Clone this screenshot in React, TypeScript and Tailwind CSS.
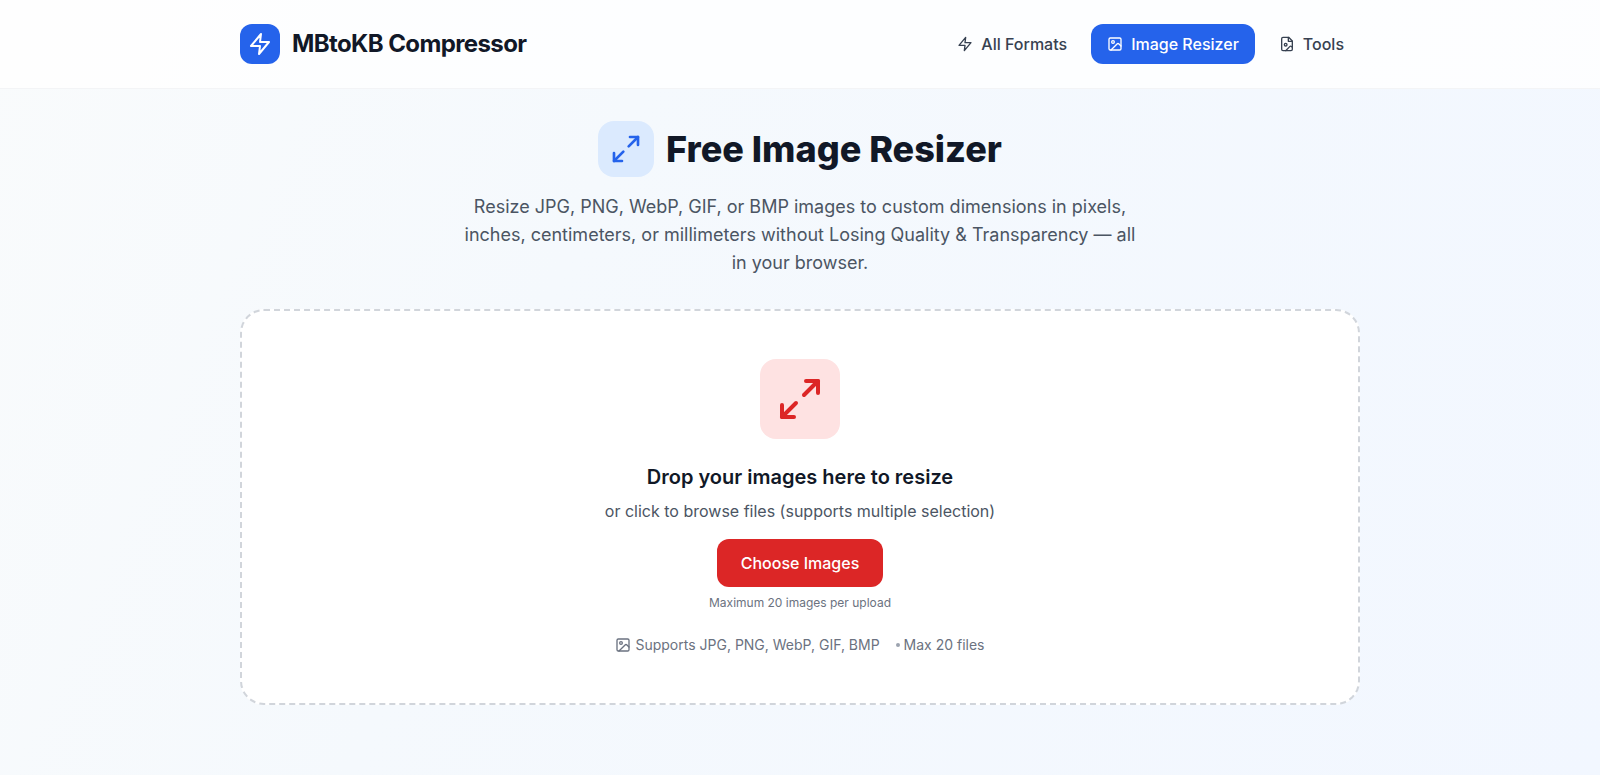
import { useRef } from "react";
import type { ReactNode } from "react";

type IconProps = { className?: string; children: ReactNode };

function Icon({ className = "", children }: IconProps) {
  return (
    <svg
      className={className}
      viewBox="0 0 24 24"
      fill="none"
      stroke="currentColor"
      strokeWidth={2}
      strokeLinecap="round"
      strokeLinejoin="round"
      aria-hidden="true"
    >
      {children}
    </svg>
  );
}

function ZapIcon({ className }: { className?: string }) {
  return (
    <Icon className={className}>
      <polygon points="13 2 3 14 12 14 11 22 21 10 12 10 13 2" />
    </Icon>
  );
}

function PictureIcon({ className }: { className?: string }) {
  return (
    <Icon className={className}>
      <rect width="18" height="18" x="3" y="3" rx="2" ry="2" />
      <circle cx="9" cy="9" r="2" />
      <path d="m21 15-3.086-3.086a2 2 0 0 0-2.828 0L6 21" />
    </Icon>
  );
}

function FilePictureIcon({ className }: { className?: string }) {
  return (
    <Icon className={className}>
      <path d="M14.5 2H6a2 2 0 0 0-2 2v16a2 2 0 0 0 2 2h12a2 2 0 0 0 2-2V7.500L14.500 2z" />
      <polyline points="14 2 14 8 20 8" />
      <circle cx="10" cy="13" r="2" />
      <path d="m20 17-1.090-1.090a2 2 0 0 0-2.820 0L10 22" />
    </Icon>
  );
}

function ExpandIcon({ className }: { className?: string }) {
  return (
    <Icon className={className}>
      <polyline points="15 3 21 3 21 9" />
      <polyline points="9 21 3 21 3 15" />
      <line x1="21" x2="14" y1="3" y2="10" />
      <line x1="3" x2="10" y1="21" y2="14" />
    </Icon>
  );
}

function Header() {
  return (
    <header className="border-b border-gray-100 bg-white/80">
      <div className="mx-auto flex max-w-6xl items-center justify-between px-4 py-6">
        <a href="#home" className="flex items-center gap-3">
          <span className="flex size-10 items-center justify-center rounded-xl bg-[#2563eb] text-white">
            <ZapIcon className="size-6" />
          </span>
          <span className="text-2xl font-bold tracking-tight text-[#111827]">MBtoKB Compressor</span>
        </a>
        <nav className="flex items-center gap-2 font-medium text-[#374151]">
          <a href="#formats" className="flex items-center gap-2 rounded-xl px-4 py-2">
            <ZapIcon className="size-4" />
            All Formats
          </a>
          <a
            href="#resizer"
            aria-current="page"
            className="flex items-center gap-2 rounded-xl bg-[#2563eb] px-4 py-2 text-white"
          >
            <PictureIcon className="size-4" />
            Image Resizer
          </a>
          <a href="#tools" className="flex items-center gap-2 rounded-xl px-4 py-2">
            <FilePictureIcon className="size-4" />
            Tools
          </a>
        </nav>
      </div>
    </header>
  );
}

function DropZone() {
  const picker = useRef<HTMLInputElement>(null);
  return (
    <section className="flex flex-col items-center rounded-3xl border-2 border-dashed border-[#d1d5db] bg-white p-12 text-center">
      <div className="mb-6 flex size-20 items-center justify-center rounded-2xl bg-[#fee2e2] text-[#dc2626]">
        <ExpandIcon className="size-12" />
      </div>
      <h2 className="mb-2 text-xl font-semibold text-[#111827]">Drop your images here to resize</h2>
      <p className="mb-4 text-[#4b5563]">or click to browse files (supports multiple selection)</p>
      <input ref={picker} type="file" accept="image/*" multiple hidden aria-label="Choose Images" />
      <button
        type="button"
        onClick={() => picker.current?.click()}
        className="cursor-pointer rounded-xl bg-[#dc2626] px-6 py-3 font-medium text-white"
      >
        Choose Images
      </button>
      <p className="mt-2 text-xs text-[#6b7280]">Maximum 20 images per upload</p>
      <div className="mt-6 flex flex-wrap items-center justify-center gap-4 text-sm text-[#6b7280]">
        <span className="flex items-center gap-1">
          <PictureIcon className="size-4" />
          Supports JPG, PNG, WebP, GIF, BMP
        </span>
        <span className="flex items-center gap-1">
          <span className="size-1 rounded-full bg-[#9ca3af]" />
          Max 20 files
        </span>
      </div>
    </section>
  );
}

export default function App() {
  return (
    <div className="min-h-screen bg-[linear-gradient(113deg,#f9fbfc_0%,#f5f9fd_35%,#f2f7ff_100%)] font-['Inter',sans-serif]">
      <Header />
      <main className="mx-auto max-w-6xl px-4 py-8">
        <div className="mb-8 text-center">
          <div className="mb-4 flex items-center justify-center gap-3">
            <span className="flex size-14 items-center justify-center rounded-2xl bg-[#dbeafe] text-[#2563eb]">
              <ExpandIcon className="size-8" />
            </span>
            <h1 className="text-4xl font-extrabold text-[#111827]">Free Image Resizer</h1>
          </div>
          <p className="mx-auto max-w-2xl text-lg text-[#4b5563]">
            Resize JPG, PNG, WebP, GIF, or BMP images to custom dimensions in pixels, inches, centimeters, or
            millimeters without Losing Quality &amp; Transparency — all in your browser.
          </p>
        </div>
        <DropZone />
      </main>
    </div>
  );
}
